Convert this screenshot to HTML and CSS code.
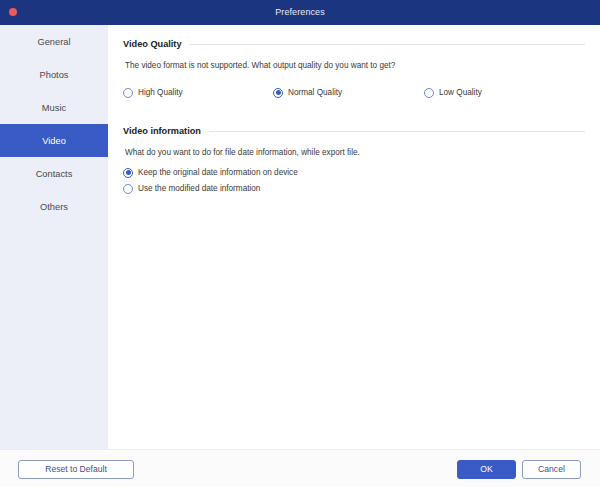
FILE: index.html
```html
<!DOCTYPE html>
<html>
<head>
<meta charset="utf-8">
<link rel="stylesheet" href="styles.css">
</head>
<body>
<div class="window">
  <div class="titlebar">
    <span class="close-dot"></span>
    <span class="title">Preferences</span>
  </div>
  <div class="main">
    <nav class="sidebar">
      <div class="nav-item">General</div>
      <div class="nav-item">Photos</div>
      <div class="nav-item">Music</div>
      <div class="nav-item active">Video</div>
      <div class="nav-item">Contacts</div>
      <div class="nav-item">Others</div>
    </nav>
    <section class="content">
      <div class="group">
        <div class="group-head"><span class="group-title">Video Quality</span><span class="rule"></span></div>
        <p class="desc">The video format is not supported. What output quality do you want to get?</p>
        <div class="radio-row">
          <label class="radio q1"><span class="dot"></span>High Quality</label>
          <label class="radio q2"><span class="dot on"></span>Normal Quality</label>
          <label class="radio q3"><span class="dot"></span>Low Quality</label>
        </div>
      </div>
      <div class="group second">
        <div class="group-head"><span class="group-title">Video information</span><span class="rule"></span></div>
        <p class="desc">What do you want to do for file date information, while export file.</p>
        <div class="radio-col">
          <label class="radio"><span class="dot on"></span>Keep the original date information on device</label>
          <label class="radio"><span class="dot"></span>Use the modified date information</label>
        </div>
      </div>
    </section>
  </div>
  <footer class="footer">
    <button class="btn reset">Reset to Default</button>
    <div class="right-btns">
      <button class="btn primary">OK</button>
      <button class="btn cancel">Cancel</button>
    </div>
  </footer>
</div>
</body>
</html>
```
FILE: styles.css
```css
* { box-sizing: border-box; }
html, body { margin: 0; padding: 0; }
body {
  width: 600px;
  height: 487px;
  font-family: "Liberation Sans", Arial, sans-serif;
  color: #333;
  overflow: hidden;
}
.window { display: flex; flex-direction: column; height: 487px; background: #fff; }
.titlebar {
  height: 25px;
  background: #1b3580;
  display: flex;
  align-items: center;
  justify-content: center;
  position: relative;
  border-bottom: 1px solid #1b3580;
}
.close-dot {
  position: absolute;
  left: 9px;
  top: 8px;
  width: 8px;
  height: 8px;
  border-radius: 50%;
  background: #ee5b57;
}
.title { color: #e8ecf6; font-size: 9px; font-weight: normal; letter-spacing: 0.1px; margin-top: 0; }
.main { display: flex; flex: 1; min-height: 0; }
.sidebar { width: 108px; background: #eceff8; display: flex; flex-direction: column; }
.nav-item {
  height: 33px;
  display: flex;
  align-items: center;
  justify-content: center;
  font-size: 9.3px;
  color: #4a4a4a;
}
.nav-item.active { background: #3a5bc6; color: #fff; }
.content { flex: 1; padding: 13px 15px 0 15px; }
.group-head { display: flex; align-items: center; gap: 8px; height: 12px; }
.group-title { font-size: 9.2px; font-weight: bold; color: #222; white-space: nowrap; }
.rule { flex: 1; height: 1px; background: #e4e4e4; }
.desc { margin: 10px 0 0 2px; font-size: 8.2px; color: #3a3a3a; line-height: 11px; }
.radio-row { display: flex; margin-top: 16px; }
.radio { display: flex; align-items: center; gap: 5px; font-size: 8.2px; color: #3a3a3a; height: 11px; }
.q1 { width: 150px; }
.q2 { width: 151px; }
.dot {
  width: 10px;
  height: 10px;
  border-radius: 50%;
  border: 1px solid #6e86c4;
  background: #fff;
  flex: none;
  position: relative;
}
.dot.on { border-color: #3a5bc6; }
.dot.on::after {
  content: "";
  position: absolute;
  left: 1.5px;
  top: 1.5px;
  width: 5px;
  height: 5px;
  border-radius: 50%;
  background: #3a5bc6;
}
.second { margin-top: 27px; }
.radio-col { display: flex; flex-direction: column; gap: 5px; margin-top: 9px; }
.footer {
  height: 38px;
  border-top: 1px solid #ebebeb;
  background: #fbfbfb;
  display: flex;
  align-items: center;
  justify-content: space-between;
  padding: 0 19px 0 18px;
}
.right-btns { display: flex; gap: 6px; }
.btn {
  height: 19px;
  border-radius: 3px;
  font-family: "Liberation Sans", Arial, sans-serif;
  font-size: 8.6px;
  border: 1px solid #8a9bbf;
  background: #fff;
  color: #3c4f86;
  padding: 0;
  margin-top: 1px;
}
.reset { width: 116px; }
.primary { width: 59px; background: #3a5bc6; border-color: #3a5bc6; color: #fff; }
.cancel { width: 59px; }
```
